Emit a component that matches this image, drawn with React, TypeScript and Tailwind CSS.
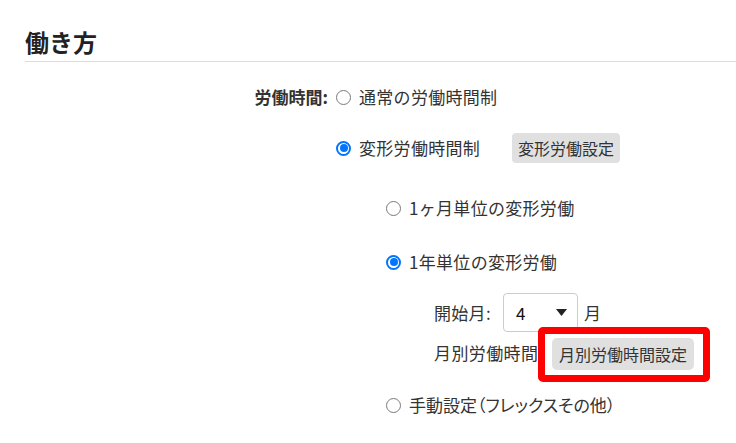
import React from 'react';

const font = { fontFamily: '"Noto Sans CJK JP", "Noto Sans", sans-serif' };

function Dot({ checked }: { checked?: boolean }) {
  if (checked) {
    return (
      <span className="w-[15px] h-[15px] shrink-0 rounded-full border-2 border-[#0075ff] bg-white flex items-center justify-center">
        <span className="w-[8px] h-[8px] rounded-full bg-[#0075ff]" />
      </span>
    );
  }
  return <span className="w-[15px] h-[15px] shrink-0 rounded-full border-[1.5px] border-[#7a7a7a] bg-white" />;
}

function Radio({ checked, label, className = '' }: { checked?: boolean; label: string; className?: string }) {
  return (
    <label className={`flex items-center gap-[8px] h-[30px] ${className}`}>
      <Dot checked={checked} />
      <span className="text-[17px] leading-[30px] tracking-[0.3px]">{label}</span>
    </label>
  );
}

export default function App() {
  return (
    <div className="w-[736px] h-[443px] bg-white overflow-hidden text-[#333]" style={font}>
      {/* 見出し */}
      <div className="ml-[25px] mt-[30px] pb-[7px] border-b border-[#dddddd]">
        <h2 className="text-[24px] leading-[24px] font-bold text-[#222]">働き方</h2>
      </div>

      <div className="flex mt-[20px]">
        <div className="w-[328px] text-right font-bold text-[17px] leading-[30px] h-[30px]">労働時間:</div>
        <div className="ml-[8px] flex flex-col">
          <Radio label="通常の労働時間制" />

          <div className="flex items-center mt-[21px]">
            <Radio checked label="変形労働時間制" />
            <button className="ml-[32px] h-[30px] px-[6px] rounded-[4px] bg-[#e0e0e0] text-[16px] leading-[30px] text-[#333]">
              変形労働設定
            </button>
          </div>

          <div className="pl-[50px] flex flex-col">
            <Radio label="1ヶ月単位の変形労働" className="mt-[30px]" />
            <Radio checked label="1年単位の変形労働" className="mt-[24px]" />

            <div className="pl-[48px] flex flex-col">
              <div className="flex items-center mt-[16px] h-[39px] text-[17px]">
                <span className="tracking-[0.3px]">開始月:</span>
                <div className="ml-[12px] w-[75px] h-[39px] border border-[#cccccc] rounded-[4px] flex items-center justify-between pl-[12px] pr-[10px] text-[#111]">
                  <span className="text-[17px]">4</span>
                  <svg width="11" height="7" viewBox="0 0 11 7">
                    <path d="M0 0 L11 0 L5.5 7 Z" fill="#222" />
                  </svg>
                </div>
                <span className="ml-[6px]">月</span>
              </div>

              <div className="relative flex items-center mt-[5px] h-[32px] text-[17px]">
                {/* 赤枠に隠れる部分は切り取る */}
                <span className="w-[104px] overflow-hidden tracking-[0.4px] whitespace-nowrap">月別労働時間設定:</span>
                {/* 注釈の赤枠 */}
                <div className="absolute left-[104px] top-[-10px] w-[172px] h-[55px] border-[7px] border-[#ff0000] rounded-[5px] bg-white pl-[7px] pt-[4px]">
                  <button className="h-[32px] px-[7px] rounded-[5px] bg-[#e0e0e0] text-[16px] leading-[32px] text-[#333] whitespace-nowrap">
                    月別労働時間設定
                  </button>
                </div>
              </div>
            </div>

            <label className="flex items-center gap-[8px] h-[30px] mt-[21px]">
              <Dot />
              <span className="text-[17px] leading-[30px]" style={{ fontFeatureSettings: '"palt"' }}>
                手動設定（フレックスその他）
              </span>
            </label>
          </div>
        </div>
      </div>
    </div>
  );
}
